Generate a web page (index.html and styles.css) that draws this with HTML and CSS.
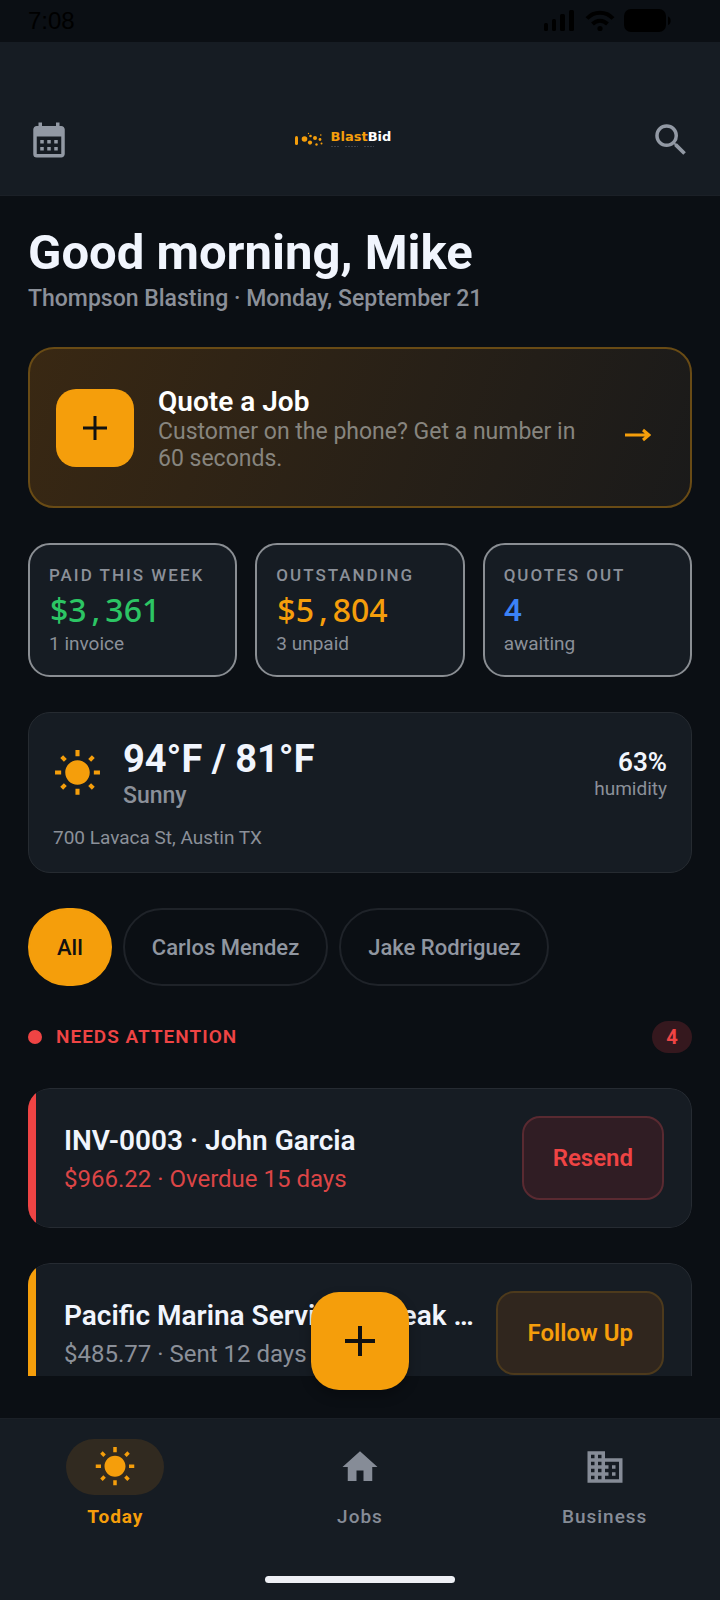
FILE: index.html
```html
<!DOCTYPE html>
<html lang="en">
<head>
<meta charset="utf-8">
<meta name="viewport" content="width=device-width, initial-scale=1">
<title>BlastBid</title>
<link rel="stylesheet" href="styles.css">
</head>
<body>
<div class="status-bar">
  <span class="status-time">7:08</span>
  <div class="status-icons">
    <svg class="signal" viewBox="0 0 32 22" aria-hidden="true"><rect x="0" y="13" width="4" height="8" rx="1.500"/><rect x="8" y="9" width="4" height="12" rx="1.500"/><rect x="16" y="4" width="5" height="17" rx="1.500"/><rect x="25" y="0" width="5" height="21" rx="1.500"/></svg>
    <svg class="wifi" viewBox="0 0 30 22" aria-hidden="true"><g fill="none" stroke="#000" stroke-width="4"><path d="M2 8.500C9 .8 21 .8 28 8.500"/><path d="M7.500 14C12 9.600 18 9.600 22.500 14"/></g><circle cx="15" cy="18.500" r="2.600"/></svg>
    <svg class="battery" viewBox="0 0 48 24" aria-hidden="true"><rect x="0" y="0" width="42" height="23" rx="7"/><path d="M44 7.500c3.500 1 3.500 7.500 0 8.500z"/></svg>
  </div>
</div>

<header class="app-bar">
  <button class="icon-button" aria-label="Calendar">
    <svg class="icon" viewBox="0 0 24 24"><path d="M19 4h-1V2h-2v2H8V2H6v2H5c-1.110 0-1.990.9-1.990 2L3 20a2 2 0 0 0 2 2h14c1.100 0 2-.9 2-2V6c0-1.100-.9-2-2-2zm0 16H5V10h14v10zM9 14H7v-2h2v2zm4 0h-2v-2h2v2zm4 0h-2v-2h2v2zm-8 4H7v-2h2v2zm4 0h-2v-2h2v2zm4 0h-2v-2h2v2z"/></svg>
  </button>
  <div class="logo">
    <svg class="logo-mark" viewBox="0 0 30 16" aria-hidden="true"><rect x="0" y="4" width="3" height="9" rx="1.500"/><circle cx="9.500" cy="7" r="2.800"/><circle cx="15" cy="10.600" r="2.100"/><circle cx="15.500" cy="4" r="1.300"/><circle cx="20" cy="6" r="2"/><circle cx="21.500" cy="12.500" r="1.200"/><circle cx="25" cy="7.500" r="1.400"/><circle cx="26.500" cy="11.500" r="1"/><circle cx="25.800" cy="3" r=".8"/><circle cx="13.500" cy="1.500" r=".7"/></svg>
    <div class="logo-words">
      <div class="logo-name">Blast<span class="logo-bid">Bid</span></div>
      <svg class="logo-tag" viewBox="0 0 46 3" aria-hidden="true"><path d="M0 1.500h9M14 1.500h13M33 1.500h10" stroke-dasharray="2 1"/></svg>
    </div>
  </div>
  <button class="icon-button" aria-label="Search">
    <svg class="icon" viewBox="0 0 24 24"><path d="M15.500 14h-.79l-.28-.27A6.471 6.471 0 0 0 16 9.500 6.500 6.500 0 1 0 9.500 16c1.610 0 3.090-.59 4.230-1.570l.27.28v.79l5 4.990L20.490 19l-4.990-5zm-6 0C7.010 14 5 11.990 5 9.500S7.010 5 9.500 5 14 7.010 14 9.500 11.990 14 9.500 14z"/></svg>
  </button>
</header>

<main class="feed">
  <div class="greeting">
    <h1>Good morning, Mike</h1>
    <p>Thompson Blasting · Monday, September 21</p>
  </div>

  <a class="quote-card" href="#quote">
    <span class="quote-plus"><svg viewBox="0 0 24 24" aria-hidden="true"><path d="M12 0v24M0 12h24"/></svg></span>
    <span class="quote-text">
      <strong>Quote a Job</strong>
      <span>Customer on the phone? Get a number in 60 seconds.</span>
    </span>
    <svg class="quote-arrow" viewBox="0 0 26 14" aria-hidden="true"><path d="M0 7h23M18 2l6 5-6 5"/></svg>
  </a>

  <section class="stats">
    <button class="stat"><span class="stat-label">PAID THIS WEEK</span><span class="stat-value tabular green">$3<span class="comma">,</span>361</span><span class="stat-note">1 invoice</span></button>
    <button class="stat"><span class="stat-label">OUTSTANDING</span><span class="stat-value tabular amber">$5<span class="comma">,</span>804</span><span class="stat-note">3 unpaid</span></button>
    <button class="stat"><span class="stat-label">QUOTES OUT</span><span class="stat-value blue">4</span><span class="stat-note">awaiting</span></button>
  </section>

  <section class="weather">
    <div class="weather-row">
      <svg class="weather-sun" viewBox="0 0 24 24" aria-hidden="true"><path d="m6.760 4.840-1.800-1.790-1.410 1.410 1.790 1.790 1.420-1.410zM4 10.500H1v2h3v-2zm9-9.950h-2V3.500h2V.55zm7.450 3.910-1.410-1.410-1.790 1.790 1.410 1.410 1.790-1.790zm-3.210 13.700 1.790 1.800 1.410-1.410-1.800-1.790-1.400 1.400zM20 10.500v2h3v-2h-3zm-8-5c-3.310 0-6 2.690-6 6s2.690 6 6 6 6-2.690 6-6-2.690-6-6-6zm-1 16.950h2V19.500h-2v2.950zm-7.450-3.910 1.410 1.410 1.790-1.800-1.410-1.410-1.790 1.800z"/></svg>
      <div class="weather-main"><div class="temp">94°F / 81°F</div><div class="sky">Sunny</div></div>
      <div class="humidity"><strong>63%</strong><span>humidity</span></div>
    </div>
    <div class="address">700 Lavaca St, Austin TX</div>
  </section>

  <div class="chips">
    <button class="chip chip-active">All</button>
    <button class="chip">Carlos Mendez</button>
    <button class="chip">Jake Rodriguez</button>
  </div>

  <div class="section-head">
    <span class="dot"></span>
    <h2>NEEDS ATTENTION</h2>
    <span class="count">4</span>
  </div>

  <article class="task task-red">
    <div class="task-text"><h3>INV-0003 · John Garcia</h3><p>$966.22 · Overdue 15 days</p></div>
    <button class="task-action">Resend</button>
  </article>
  <article class="task task-amber">
    <div class="task-text"><h3>Pacific Marina Services: Break …</h3><p>$485.77 · Sent 12 days ago</p></div>
    <button class="task-action">Follow Up</button>
  </article>
</main>

<footer class="bottom">
  <button class="fab" aria-label="New quote"><svg viewBox="0 0 30 30" aria-hidden="true"><path d="M15 0v30M0 15h30"/></svg></button>
  <nav class="tabs">
    <a class="tab tab-active" href="#today"><span class="tab-pill"><svg class="icon" viewBox="0 0 24 24" aria-hidden="true"><path d="m6.760 4.840-1.800-1.790-1.410 1.410 1.790 1.790 1.420-1.410zM4 10.500H1v2h3v-2zm9-9.950h-2V3.500h2V.55zm7.450 3.910-1.410-1.410-1.790 1.790 1.410 1.410 1.790-1.790zm-3.210 13.700 1.790 1.800 1.410-1.410-1.800-1.790-1.400 1.400zM20 10.500v2h3v-2h-3zm-8-5c-3.310 0-6 2.690-6 6s2.690 6 6 6 6-2.690 6-6-2.690-6-6-6zm-1 16.950h2V19.500h-2v2.950zm-7.450-3.910 1.410 1.410 1.790-1.800-1.410-1.410-1.790 1.800z"/></svg></span>Today</a>
    <a class="tab" href="#jobs"><span class="tab-pill"><svg class="icon" viewBox="0 0 24 24" aria-hidden="true"><path d="M10 20v-6h4v6h5v-8h3L12 3 2 12h3v8z"/></svg></span>Jobs</a>
    <a class="tab" href="#business"><span class="tab-pill"><svg class="icon" viewBox="0 0 24 24" aria-hidden="true"><path d="M12 7V3H2v18h20V7H12zM6 19H4v-2h2v2zm0-4H4v-2h2v2zm0-4H4V9h2v2zm0-4H4V5h2v2zm4 12H8v-2h2v2zm0-4H8v-2h2v2zm0-4H8V9h2v2zm0-4H8V5h2v2zm10 12h-8v-2h2v-2h-2v-2h2v-2h-2V9h8v10zm-2-8h-2v2h2v-2zm0 4h-2v2h2v-2z"/></svg></span>Business</a>
  </nav>
  <div class="home-indicator"></div>
</footer>
</body>
</html>
```
FILE: styles.css
```css
:root {
  --bg: #0b0f14;
  --surface: #161c23;
  --line: #262b31;
  --text: #f1f5fd;
  --muted: #8b9099;
  --amber: #f59e0b;
  --red: #ef4444;
}

* { box-sizing: border-box; }

body {
  margin: 0;
  height: 100vh;
  display: flex;
  flex-direction: column;
  background: var(--bg);
  color: var(--text);
  font-family: Roboto, "Liberation Sans", sans-serif;
}

h1, h2, h3, p { margin: 0; }
button { font-family: inherit; cursor: pointer; }
a { color: inherit; text-decoration: none; }
svg { display: block; flex: none; }

.status-bar {
  display: flex;
  justify-content: space-between;
  align-items: center;
  height: 42px;
  padding: 0 48px 0 28px;
  flex: none;
}
.status-time { color: #000; font: 24px/40px "Liberation Sans", sans-serif; }
.status-icons { display: flex; align-items: center; gap: 9px; }
.signal { width: 32px; height: 22px; }
.wifi { width: 30px; height: 22px; }
.battery { width: 48px; height: 24px; }

.app-bar {
  display: flex;
  align-items: center;
  justify-content: space-between;
  flex: none;
  height: 154px;
  padding: 43px 28px 0;
  background: var(--surface);
  border-bottom: 1px solid #1b2027;
}
.icon-button { padding: 0; border: 0; background: none; color: #9299a4; }
.icon { width: 42px; height: 42px; fill: currentColor; }
.logo { display: flex; align-items: center; gap: 6px; margin: 0 34px 4px 0; }
.logo-mark { width: 30px; height: 16px; margin-top: 3px; fill: var(--amber); }
.logo-name { color: var(--amber); font: bold 13px/16px "DejaVu Sans", sans-serif; }
.logo-bid { color: #fff; }
.logo-tag { width: 46px; height: 3px; stroke: #3a404a; stroke-width: 1; }

.feed {
  display: flex;
  flex-direction: column;
  gap: 35px;
  flex: 1;
  min-height: 0;
  overflow: hidden;
  padding: 27px 28px 0;
}
.feed > * { flex: none; }

.greeting h1 { font-size: 49px; line-height: 60px; font-weight: 700; }
.greeting p { margin-top: 2px; color: var(--muted); font-size: 23px; line-height: 27px; font-weight: 500; }

.quote-card {
  display: flex;
  align-items: center;
  height: 161px;
  padding: 0 39px 0 26px;
  border: 2px solid #694b15;
  border-radius: 26px;
  background: linear-gradient(110deg, #392813, #1a1a1a);
}
.quote-plus {
  display: grid;
  place-items: center;
  width: 78px;
  height: 78px;
  border-radius: 20px;
  background: var(--amber);
}
.quote-plus svg { width: 24px; height: 24px; stroke: #111; stroke-width: 3; }
.quote-text { flex: 1; margin: 0 48px 0 24px; padding-top: 3px; }
.quote-text strong { display: block; color: #fff; font-size: 28px; line-height: 32px; font-weight: 600; }
.quote-text span { display: block; color: #87857f; font-size: 23px; line-height: 27px; }
.quote-arrow { width: 26px; height: 14px; margin-top: 15px; fill: none; stroke: var(--amber); stroke-width: 3; }

.stats { display: grid; grid-template-columns: repeat(3, 1fr); gap: 18px; }
.stat {
  display: flex;
  flex-direction: column;
  padding: 20px 0 19px 19px;
  border: 2px solid #8a8e93;
  border-radius: 22px;
  background: var(--surface);
  color: var(--muted);
  text-align: left;
}
.stat-label { font-size: 17px; line-height: 20px; font-weight: 500; letter-spacing: 2px; white-space: nowrap; }
.stat-value { margin: 7px 0 4px; font-size: 32px; line-height: 36px; font-weight: 500; }
.tabular { padding-left: 1px; font-family: "Noto Sans", sans-serif; }
.comma { padding: 0 5px; }
.stat-note { font-size: 19px; line-height: 24px; }
.green { color: #2cc564; }
.amber { color: var(--amber); }
.blue { color: #3b82f6; }

.weather { padding: 24px 24px 22px; border: 1px solid var(--line); border-radius: 22px; background: var(--surface); }
.weather-row { display: flex; align-items: center; }
.weather-sun { width: 49px; height: 49px; fill: var(--amber); }
.weather-main { flex: 1; margin-left: 21px; }
.temp { font-size: 38px; line-height: 45px; font-weight: 700; }
.sky { color: var(--muted); font-size: 23px; line-height: 28px; font-weight: 500; }
.humidity { display: flex; flex-direction: column; text-align: right; }
.humidity strong { font-size: 26px; line-height: 30px; font-weight: 600; }
.humidity span { color: var(--muted); font-size: 19px; line-height: 24px; }
.address { margin-top: 16px; color: var(--muted); font-size: 19px; line-height: 24px; }

.chips { display: flex; gap: 11px; }
.chip {
  height: 78px;
  padding: 0 27px;
  border: 2px solid #1f2329;
  border-radius: 39px;
  background: transparent;
  color: #9096a0;
  font-size: 22px;
  font-weight: 500;
}
.chip-active { border-color: var(--amber); background: var(--amber); color: #111; }

.section-head { display: flex; align-items: center; color: var(--red); }
.dot { width: 14px; height: 14px; border-radius: 50%; background: var(--red); }
.section-head h2 { flex: 1; margin-left: 14px; font-size: 19px; line-height: 24px; font-weight: 600; letter-spacing: 1px; }
.count {
  width: 40px;
  border-radius: 16px;
  background: #35181e;
  font-size: 20px;
  line-height: 32px;
  font-weight: 700;
  text-align: center;
}

.task {
  position: relative;
  display: flex;
  align-items: center;
  justify-content: space-between;
  padding: 27px 27px 27px 36px;
  border: 1px solid #262b32;
  border-left: 0;
  border-radius: 22px;
  background: var(--surface);
  clip-path: inset(0 round 22px);
}
.task::before { content: ""; position: absolute; inset: -1px auto -1px 0; width: 8px; background: currentColor; }
.task-red { color: var(--red); }
.task-amber { color: var(--amber); }
.task-text { flex: 1; min-width: 0; margin-right: 16px; padding-top: 2px; }
.task h3 {
  color: var(--text);
  font-size: 28px;
  line-height: 34px;
  font-weight: 600;
  white-space: nowrap;
  overflow: hidden;
  text-overflow: ellipsis;
}
.task p { margin-top: 6px; font-size: 24px; line-height: 30px; }
.task-red p { color: #dc4546; }
.task-amber p { color: var(--muted); }
.task-action {
  height: 84px;
  padding: 0 29px;
  border: 2px solid #592a31;
  border-radius: 18px;
  background: #301d24;
  color: var(--red);
  font-size: 24px;
  font-weight: 600;
}
.task-amber .task-action { border-color: #4d3a1c; background: #30261e; color: var(--amber); }

.bottom {
  position: relative;
  flex: none;
  margin-top: 42px;
  padding: 20px 0 17px;
  border-top: 1px solid #1b2027;
  background: var(--surface);
}
.fab {
  position: absolute;
  left: calc(50% - 49px);
  bottom: calc(100% + 29px);
  display: grid;
  place-items: center;
  width: 98px;
  height: 98px;
  padding: 0;
  border: 0;
  border-radius: 28px;
  background: var(--amber);
  box-shadow: 0 6px 12px rgba(0, 0, 0, 0.25);
}
.fab svg { width: 30px; height: 30px; stroke: #111; stroke-width: 4; }
.tabs { display: grid; grid-template-columns: repeat(3, 1fr); gap: 14px; }
.tab {
  display: flex;
  flex-direction: column;
  align-items: center;
  gap: 10px;
  color: #868c97;
  font-size: 19px;
  line-height: 24px;
  font-weight: 500;
  letter-spacing: 1px;
}
.tab-pill { display: grid; place-items: center; width: 98px; height: 56px; border-radius: 28px; }
.tab-active { color: var(--amber); font-weight: 700; }
.tab-active .tab-pill { background: #312a20; }
.home-indicator { width: 190px; height: 7px; margin: 47px auto 0; border-radius: 4px; background: #eef0f5; }
```
